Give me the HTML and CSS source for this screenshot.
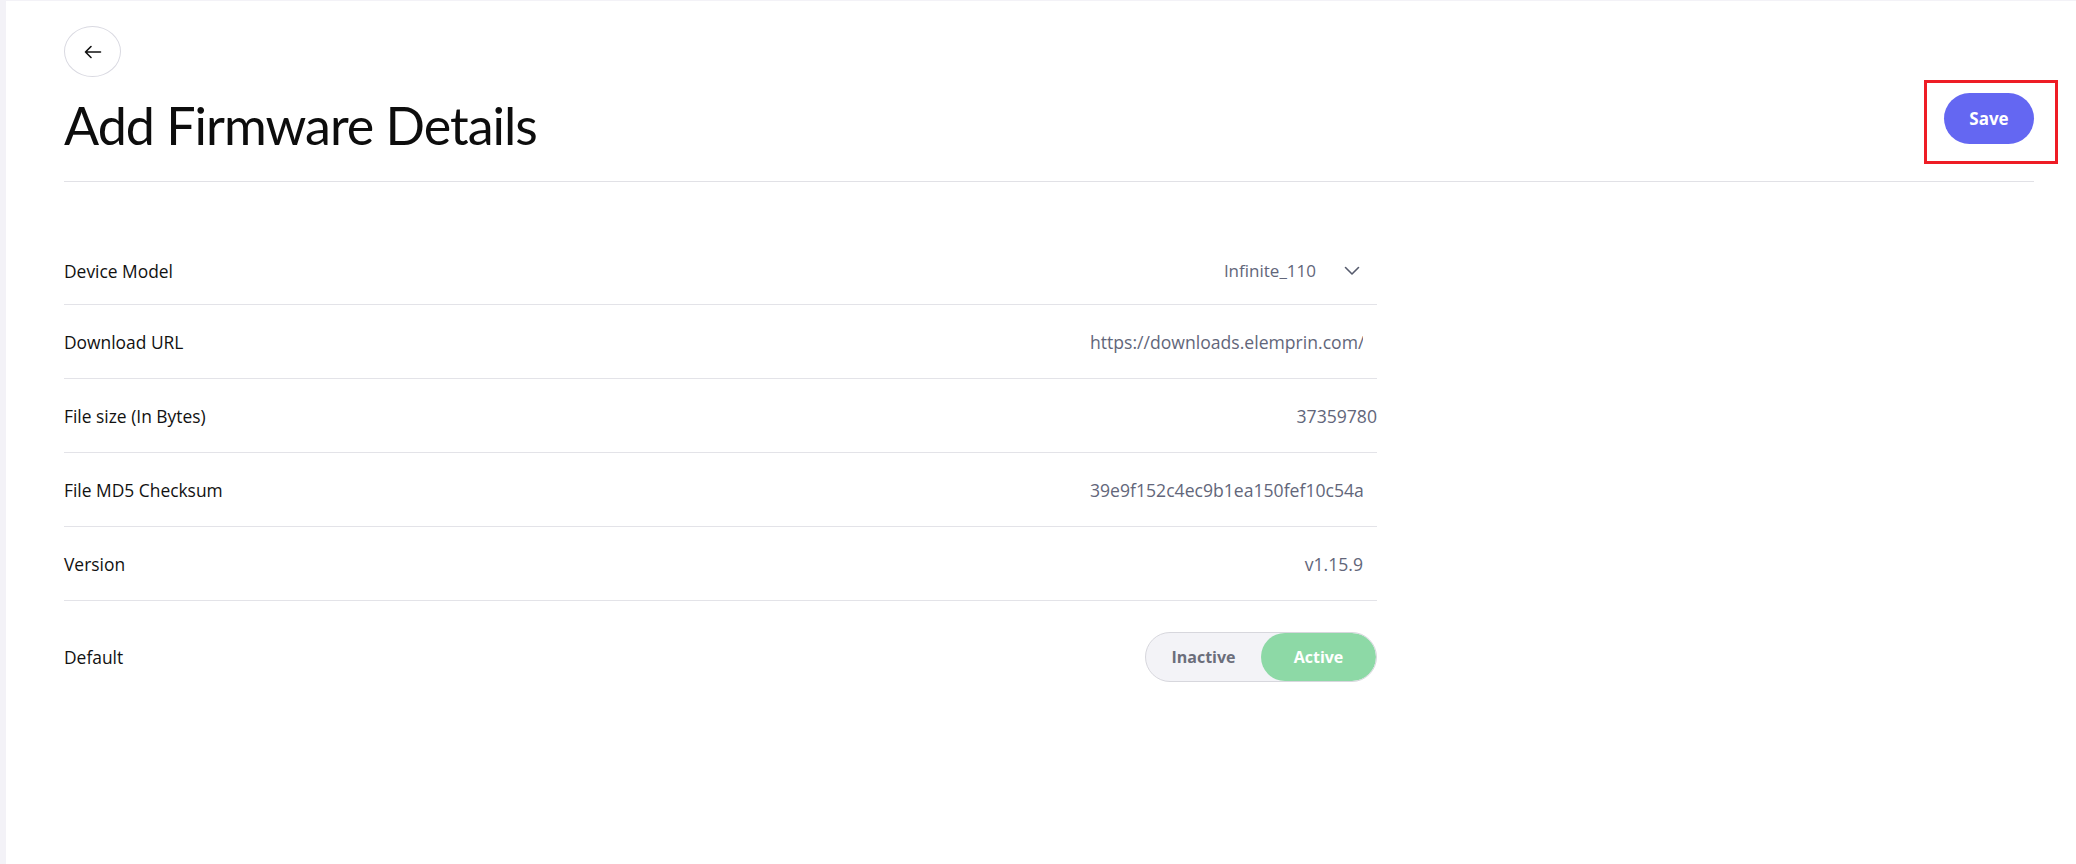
FILE: index.html
```html
<!DOCTYPE html>
<html lang="en">
<head>
<meta charset="utf-8">
<title>Add Firmware Details</title>
<link rel="stylesheet" href="styles.css">
</head>
<body>
<div class="page">
  <button class="back-btn" type="button" aria-label="Back">
    <svg width="18" height="14" viewBox="0 0 18 14" fill="none" stroke="#111" stroke-width="1.6" stroke-linecap="round" stroke-linejoin="round"><path d="M16.5 7H1.5M7 1.5L1.5 7L7 12.5"/></svg>
  </button>
  <div class="title-row">
    <h1 class="title">Add Firmware Details</h1>
    <div class="save-wrap">
      <button class="save-btn" type="button">Save</button>
      <span class="highlight"></span>
    </div>
  </div>

  <div class="form">
    <div class="row">
      <div class="label">Device Model</div>
      <div class="select">
        <span class="select-text">Infinite_110</span>
        <svg width="16" height="10" viewBox="0 0 16 10" fill="none" stroke="#565b6d" stroke-width="1.6" stroke-linecap="round" stroke-linejoin="round"><path d="M1.5 1.5L8 8L14.5 1.5"/></svg>
      </div>
    </div>
    <div class="row">
      <div class="label">Download URL</div>
      <div class="value">https://downloads.elemprin.com/</div>
    </div>
    <div class="row">
      <div class="label">File size (In Bytes)</div>
      <div class="value value-flush">37359780</div>
    </div>
    <div class="row">
      <div class="label">File MD5 Checksum</div>
      <div class="value">39e9f152c4ec9b1ea150fef10c54a16d</div>
    </div>
    <div class="row">
      <div class="label">Version</div>
      <div class="value">v1.15.9</div>
    </div>
    <div class="row row-last">
      <div class="label">Default</div>
      <div class="toggle">
        <span class="toggle-opt">Inactive</span>
        <span class="toggle-opt toggle-on">Active</span>
      </div>
    </div>
  </div>
</div>
</body>
</html>
```
FILE: styles.css
```css
* { box-sizing: border-box; }

html, body {
  margin: 0;
  padding: 0;
}

body {
  background: #f3f2f7;
  font-family: "Open Sans", "Noto Sans", sans-serif;
  color: #111;
}

.page {
  margin: 1px 0 0 6px;
  min-height: 863px;
  background: #fff;
  padding: 25px 42px 0 58px;
}

.back-btn {
  display: flex;
  align-items: center;
  justify-content: center;
  width: 57px;
  height: 51px;
  padding: 0;
  border: 1px solid #d9d9e1;
  border-radius: 50%;
  background: #fff;
  cursor: pointer;
}

.title-row {
  display: flex;
  justify-content: space-between;
  align-items: flex-start;
  margin-top: 16px;
  padding-bottom: 25px;
  border-bottom: 1px solid #e1e1e6;
}

.title {
  margin: 1px 0 0;
  font-family: "Lato", sans-serif;
  font-weight: 400;
  font-size: 52px;
  line-height: 62px;
  letter-spacing: -1px;
  color: #0d0d0d;
}

.save-wrap {
  position: relative;
}

.save-btn {
  width: 90px;
  height: 51px;
  border: none;
  border-radius: 26px;
  background: #6467f2;
  color: #fff;
  font-family: "Open Sans", sans-serif;
  font-weight: 700;
  font-size: 17px;
  cursor: pointer;
}

.highlight {
  position: absolute;
  left: -20px;
  top: -13px;
  width: 134px;
  height: 84px;
  border: 3px solid #ee1c25;
  pointer-events: none;
}

.form {
  width: 1313px;
  margin-top: 49px;
}

.row {
  display: flex;
  align-items: center;
  justify-content: space-between;
  height: 74px;
  border-bottom: 1px solid #e3e3e8;
}

.row:first-child {
  padding-top: 6px;
}

.row-last {
  height: auto;
  align-items: center;
  padding-top: 31px;
  border-bottom: none;
}

.label {
  font-size: 17.4px;
  color: #111;
}

.value {
  width: 273px;
  margin-right: 14px;
  overflow: hidden;
  white-space: nowrap;
  text-align: right;
  font-size: 17.6px;
  color: #62667a;
}

.value-flush {
  margin-right: 0;
}

.select {
  display: flex;
  align-items: center;
  gap: 28px;
  margin-right: 17px;
  font-size: 17px;
  color: #62667a;
}

.toggle {
  display: flex;
  width: 232px;
  height: 50px;
  border: 1px solid #d7d7dd;
  border-radius: 25px;
  background: #f3f3f7;
  overflow: hidden;
}

.toggle-opt {
  flex: 1;
  display: flex;
  align-items: center;
  justify-content: center;
  font-size: 16px;
  font-weight: 700;
  color: #6b6e7b;
}

.toggle-on {
  background: #8dd9a6;
  border-radius: 25px;
  color: #fff;
}
```
